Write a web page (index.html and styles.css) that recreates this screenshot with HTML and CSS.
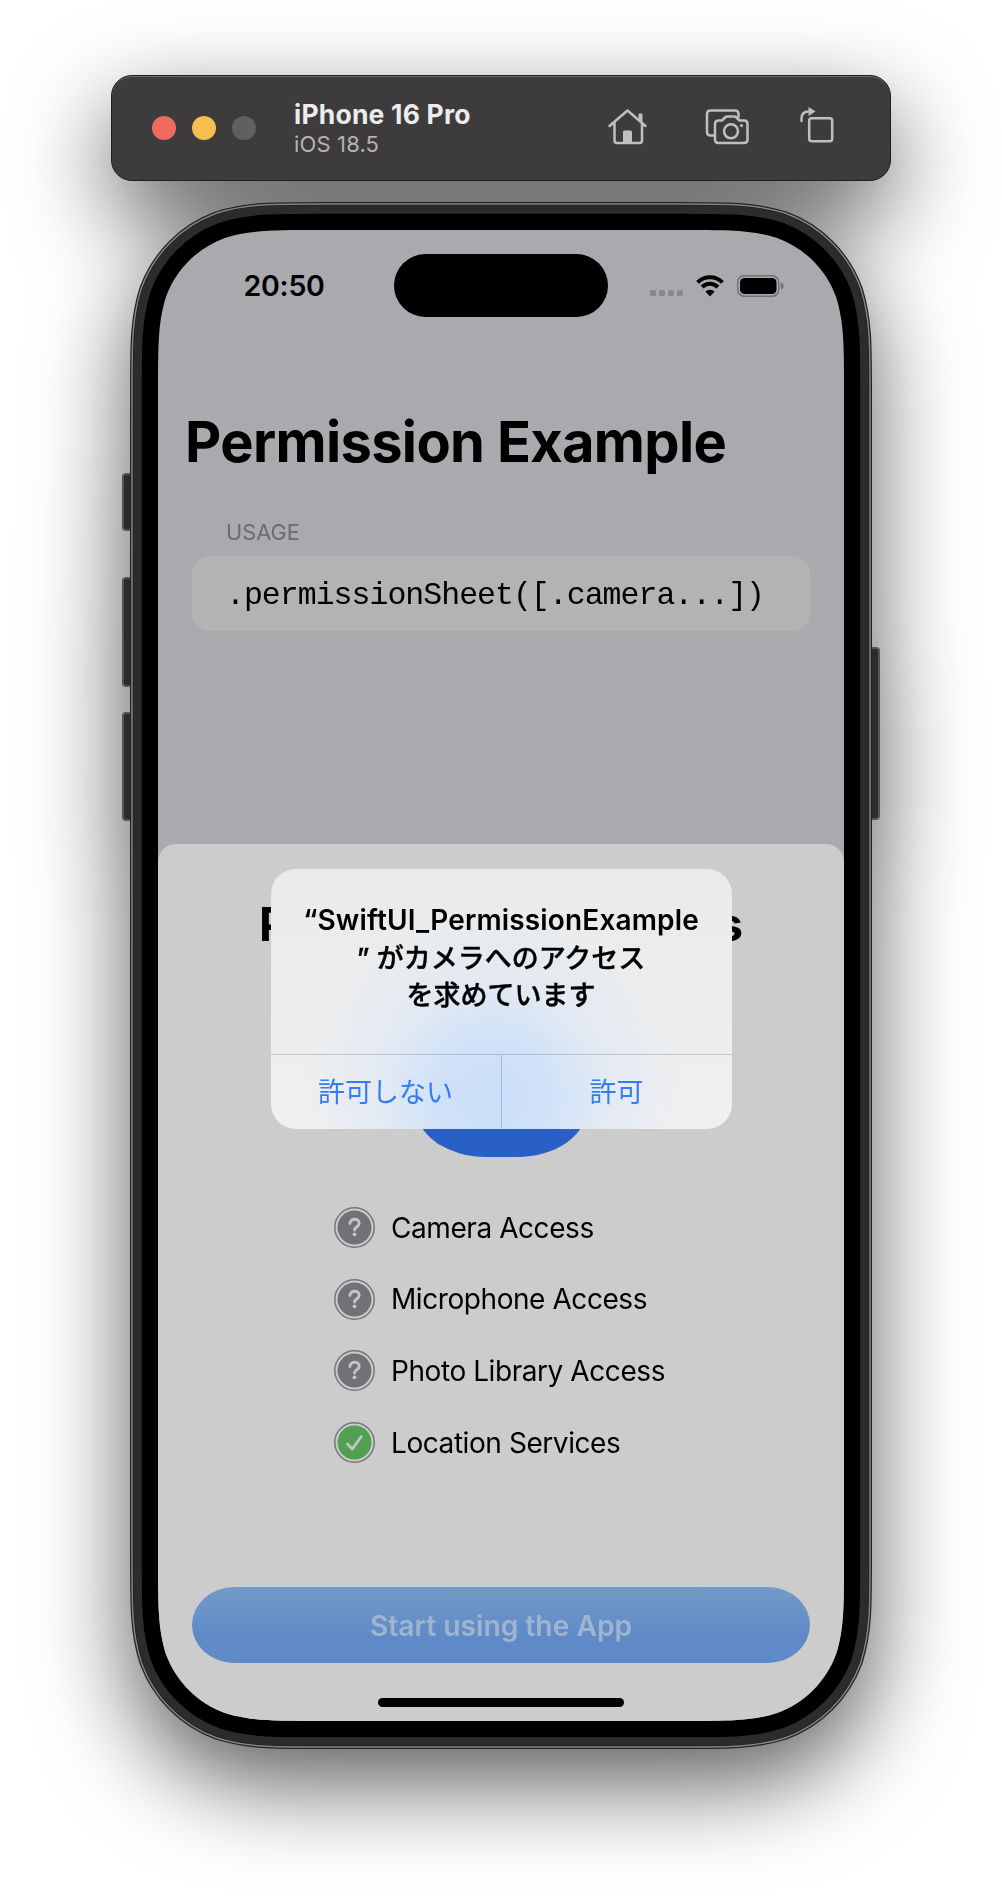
FILE: index.html
```html
<!DOCTYPE html>
<html lang="ja">
<head>
<meta charset="utf-8">
<title>Permission Example</title>
<link rel="stylesheet" href="styles.css">
</head>
<body>
<div class="simulator">
  <header class="toolbar">
    <div class="lights"><i class="light red"></i><i class="light yellow"></i><i class="light off"></i></div>
    <div class="device">
      <strong class="device-name">iPhone 16 Pro</strong>
      <span class="device-os">iOS 18.5</span>
    </div>
    <div class="tools">
      <svg class="tool" width="40" height="40" viewBox="0 0 40 40"><path d="M1.500 18 19.500 2.500 37.500 18M6.500 15V32.500Q6.500 35 9 35H31.500Q34 35 34 32.500V15"/><path class="solid" d="M15 35V24Q15 22.500 16.500 22.500H22.500Q24 22.500 24 24V35ZM30.500 6.500Q30.500 5.500 31.500 5.500H33.500Q34.500 5.500 34.500 6.500V15.500L30.500 12Z"/></svg>
      <svg class="tool" width="46" height="40" viewBox="0 0 46 40"><path d="M9 27.500H5.500Q2 27.500 2 24V6Q2 2.500 5.500 2.500H30Q33.500 2.500 33.500 6V9"/><path d="M13.500 12.500H17L20 9.500Q21 8.500 22.500 8.500H29Q30.500 8.500 31.500 9.500L34.500 12.500H39Q42.500 12.500 42.500 16V31.500Q42.500 35 39 35H13.500Q10 35 10 31.500V16Q10 12.500 13.500 12.500Z"/><circle cx="26" cy="23.300" r="7"/><circle class="solid" cx="36.500" cy="17.500" r="1.600"/></svg>
      <svg class="tool rotate" width="40" height="40" viewBox="0 0 40 40"><rect x="9.200" y="10.200" width="23" height="23" rx="2.500"/><path d="M1.500 13V10.500Q1.500 3.500 9 3.500"/><path class="solid" d="M8.500-1 15.500 3.500 8.500 8Z"/></svg>
    </div>
  </header>

  <div class="phone">
    <i class="side action"></i><i class="side vol-up"></i><i class="side vol-down"></i><i class="side power"></i>
    <svg class="frame" viewBox="-28 -28 742 1547" width="742" height="1547">
      <defs><path id="outline" d="M162 0H524C570.600 0 593.900 0 619.100 7.900C646.500 17.900 668.100 39.500 678.100 66.900C686 92.100 686 115.400 686 162V1329C686 1375.600 686 1398.900 678.100 1424.100C668.100 1451.500 646.500 1473.100 619.100 1483.100C593.900 1491 570.600 1491 524 1491H162C115.400 1491 92.100 1491 66.900 1483.100C39.500 1473.100 17.900 1451.500 7.900 1424.100C0 1398.900 0 1375.600 0 1329V162C0 115.400 0 92.100 7.900 66.900C17.900 39.500 39.500 17.900 66.900 7.900C92.100 0 115.400 0 162 0Z"/></defs>
      <use href="#outline" class="hairline"/>
      <use href="#outline" class="rim"/>
      <use href="#outline" class="edge"/>
      <use href="#outline" class="band"/>
      <use href="#outline" class="bezel"/>
    </svg>

    <div class="screen">
      <section class="app">
        <div class="status">
          <div class="time">20:50</div>
          <div class="island"></div>
          <div class="indicators">
            <svg class="signal" width="34" height="22" viewBox="0 0 34 22"><rect x="0" y="15" width="6" height="6" rx="1.500"/><rect x="9" y="15" width="6" height="6" rx="1.500"/><rect x="18" y="15" width="6" height="6" rx="1.500"/><rect x="27" y="15" width="6" height="6" rx="1.500"/></svg>
            <svg class="wifi" width="28" height="22" viewBox="0 0 28 22"><path d="M1.600 7.400A17.700 17.700 0 0 1 26.400 7.400M6.100 12A11.300 11.300 0 0 1 21.900 12"/><path class="core" d="M9.400 16.600A6.600 6.600 0 0 1 18.600 16.600L14 21.400Z"/></svg>
            <svg class="battery" width="47" height="22" viewBox="0 0 47 22"><rect class="shell" x=".7" y=".7" width="41" height="20.600" rx="6.500"/><rect x="3" y="3" width="36.500" height="16" rx="4.500"/><path class="nub" d="M43.700 7.500Q46.700 8.500 46.700 11T43.700 14.500Z"/></svg>
          </div>
        </div>
        <h1 class="title">Permission Example</h1>
        <div class="group-label">USAGE</div>
        <div class="code-row">.permissionSheet([.camera...])</div>
      </section>

      <section class="sheet">
        <h2 class="sheet-title"><span>P</span><span>s</span></h2>
        <div class="sheet-icon"></div>
        <ul class="permissions">
          <li class="permission"><svg class="badge" viewBox="0 0 41 41"><circle class="ring" cx="20.500" cy="20.500" r="19.700"/><circle class="disc" cx="20.500" cy="20.500" r="17"/><path class="mark" d="M15.900 16.500C16 10.700 25.200 10.900 25.200 16.200C25.200 19.600 20.600 19.600 20.600 23"/><circle class="dot" cx="20.500" cy="27.300" r="1.900"/></svg>Camera Access</li>
          <li class="permission"><svg class="badge" viewBox="0 0 41 41"><circle class="ring" cx="20.500" cy="20.500" r="19.700"/><circle class="disc" cx="20.500" cy="20.500" r="17"/><path class="mark" d="M15.900 16.500C16 10.700 25.200 10.900 25.200 16.200C25.200 19.600 20.600 19.600 20.600 23"/><circle class="dot" cx="20.500" cy="27.300" r="1.900"/></svg>Microphone Access</li>
          <li class="permission"><svg class="badge" viewBox="0 0 41 41"><circle class="ring" cx="20.500" cy="20.500" r="19.700"/><circle class="disc" cx="20.500" cy="20.500" r="17"/><path class="mark" d="M15.900 16.500C16 10.700 25.200 10.900 25.200 16.200C25.200 19.600 20.600 19.600 20.600 23"/><circle class="dot" cx="20.500" cy="27.300" r="1.900"/></svg>Photo Library Access</li>
          <li class="permission granted"><svg class="badge" viewBox="0 0 41 41"><circle class="ring" cx="20.500" cy="20.500" r="19.700"/><circle class="disc" cx="20.500" cy="20.500" r="17"/><path class="mark" d="M13.500 22 18.300 27 27.300 14.500"/></svg>Location Services</li>
        </ul>
        <button class="start">Start using the App</button>
        <div class="home-indicator"></div>
      </section>

      <div class="alert">
        <div class="alert-text">
          <span class="line latin">“SwiftUI_PermissionExample</span>
          <span class="line">” がカメラへのアクセス</span>
          <span class="line">を求めています</span>
        </div>
        <div class="alert-actions">
          <button class="alert-button">許可しない</button>
          <button class="alert-button">許可</button>
        </div>
      </div>
    </div>
  </div>
</div>
</body>
</html>
```

FILE: styles.css
```css
* { box-sizing: border-box; }

body {
  margin: 0;
  height: 1900px;
  overflow: hidden;
  background: #fff;
  color: #000;
  font-family: Inter, "Noto Sans CJK JP", sans-serif;
}

button { border: 0; padding: 0; background: none; font-family: inherit; }

.simulator {
  display: flex;
  flex-direction: column;
  align-items: center;
  padding-top: 75px;
  filter: drop-shadow(0 35px 47px rgba(0, 0, 0, .63));
}

/* Simulator window bar */
.toolbar {
  width: 780px;
  height: 106px;
  display: flex;
  align-items: center;
  padding-left: 40px;
  border-radius: 21px;
  background: #3e3b3c;
  border: 1px solid #1d1f1f;
  box-shadow: inset 0 1px 0 #6c6d6c;
}
.lights { display: flex; gap: 16px; }
.light { width: 24px; height: 24px; border-radius: 50%; }
.red { background: #ee6a5f; }
.yellow { background: #f5bf4f; }
.off { background: #615f60; }
.device { display: flex; flex-direction: column; flex: none; width: 314px; margin-left: 38px; padding-top: 1px; }
.device-name { font-size: 26.500px; line-height: 31px; font-weight: 700; color: #ececec; letter-spacing: .2px; }
.device-os { font-size: 22px; line-height: 28px; color: #b4b2b3; letter-spacing: .15px; }
.tools { display: flex; gap: 57px; }
.tool { fill: none; stroke: #c0bebf; stroke-width: 2.500; stroke-linecap: round; stroke-linejoin: round; overflow: visible; }
.tool .solid { fill: #c0bebf; stroke: none; }
.rotate { margin-left: -8px; }

/* Phone body */
.phone { position: relative; width: 742px; height: 1547px; margin-top: 21px; padding: 28px; }
.frame { position: absolute; left: 0; top: 0; overflow: visible; }
.hairline { stroke: #242424; stroke-width: 56; }
.rim { stroke: #858585; stroke-width: 53.500; }
.edge { stroke: #151515; stroke-width: 50.500; }
.band { stroke: #2c2c2c; stroke-width: 49.500; }
.bezel { stroke: #000; stroke-width: 32.500; }
.side {
  position: absolute;
  left: -8px;
  width: 12px;
  background: #2b2b2b;
  border: 2px solid #555;
  border-radius: 4px 0 0 4px;
}
.action { top: 271px; height: 58px; }
.vol-up { top: 375px; height: 110px; }
.vol-down { top: 510px; height: 109px; }
.power { left: 739px; top: 445px; height: 173px; width: 11px; border-radius: 0 4px 4px 0; }

.screen {
  position: relative;
  width: 686px;
  height: 1491px;
  background: #aaa9ae;
  clip-path: path("M162 0H524C570.6 0 593.9 0 619.1 7.9C646.5 17.9 668.1 39.5 678.1 66.9C686 92.1 686 115.4 686 162V1329C686 1375.6 686 1398.9 678.1 1424.1C668.1 1451.5 646.5 1473.1 619.1 1483.1C593.9 1491 570.6 1491 524 1491H162C115.4 1491 92.1 1491 66.9 1483.1C39.5 1473.1 17.9 1451.5 7.9 1424.1C0 1398.9 0 1375.6 0 1329V162C0 115.4 0 92.1 7.9 66.9C17.9 39.5 39.5 17.9 66.9 7.9C92.1 0 115.4 0 162 0Z");
}

.app { height: 614px; }
.status { height: 111px; display: flex; align-items: center; }
.time { width: 236px; padding-left: 85.500px; font-size: 28.500px; font-weight: 600; letter-spacing: -.25px; }
.island { width: 214px; height: 63px; border-radius: 32px; background: #000; }
.indicators { display: flex; padding-left: 42px; }
.signal { fill: #89888c; }
.wifi { margin-left: 12px; fill: none; stroke: #000; stroke-width: 4; }
.wifi .core { fill: #000; stroke: none; }
.battery { margin-left: 13px; }
.battery .shell { fill: none; stroke: #727175; stroke-width: 1.500; }
.battery .nub { fill: #727175; }

.title { margin: 67px 0 0 27px; font-size: 56px; line-height: 68px; font-weight: 700; letter-spacing: -.65px; white-space: nowrap; }
.group-label { margin: 43px 0 0 68px; font-size: 21.800px; line-height: 26px; color: #6c6b71; }
.code-row {
  margin: 11px 34px 0;
  height: 75px;
  padding: 3px 0 0 34px;
  border-radius: 18px;
  background: #b3b3b3;
  font-family: "Liberation Mono", monospace;
  font-size: 31.500px;
  line-height: 74px;
  letter-spacing: -.97px;
  white-space: nowrap;
}

.sheet { height: 877px; padding-top: 52px; border-radius: 18px 18px 0 0; background: #ccc; display: flex; flex-direction: column; align-items: center; }
.sheet-title { display: flex; justify-content: space-between; width: 484px; margin: 0; font-size: 46px; line-height: 56px; font-weight: 700; }
.sheet-icon { width: 171px; height: 171px; margin-top: 34px; border-radius: 70px / 49px; background: #2860c6; flex: none; }
.permissions { list-style: none; width: 334px; margin: 50px 0 0; padding: 0; display: flex; flex-direction: column; gap: 30.700px; }
.permission { display: flex; align-items: center; gap: 16px; height: 41px; font-size: 28px; letter-spacing: -.43px; white-space: nowrap; }
.badge { width: 41px; height: 41px; flex: none; }
.ring { fill: none; stroke: #77767b; stroke-width: 1.500; }
.disc { fill: #727176; }
.granted .disc { fill: #519f52; }
.mark { fill: none; stroke: #c5c5c5; stroke-width: 2.900; stroke-linecap: round; stroke-linejoin: round; }
.dot { fill: #c5c5c5; }
.start {
  width: 618px;
  height: 76px;
  margin-top: 124px;
  padding-top: 1px;
  flex: none;
  border-radius: 42px / 38px;
  background: linear-gradient(#739bc8, #5f8ac7 65%);
  color: #a0b4d0;
  font-size: 28.200px;
  font-weight: 600;
}
.home-indicator { width: 246px; height: 9px; margin-top: 35px; border-radius: 5px; background: #000; flex: none; }

/* System alert floating over the sheet */
.alert {
  position: absolute;
  left: 112.500px;
  top: 639px;
  width: 461px;
  height: 260px;
  border-radius: 25px;
  overflow: hidden;
  background: radial-gradient(ellipse 190px 190px at 48% 88%, #cbdff9 0, #cfe1f8 28%, rgba(222, 232, 245, .7) 60%, rgba(236, 238, 238, 0) 100%), linear-gradient(#e9eaea, #f0f0f0);
}
.alert-text { height: 185px; padding-top: 33px; text-align: center; font-size: 27px; font-weight: 500; -webkit-text-stroke: .4px #000; }
.latin { font-size: 28px; font-weight: 600; letter-spacing: .15px; -webkit-text-stroke: 0; }
.line { display: block; height: 37.500px; line-height: 37.500px; white-space: nowrap; }
.alert-actions { display: flex; height: 75px; border-top: 1px solid rgba(90, 110, 130, .3); }
.alert-button { flex: 1; color: #347cf6; font-size: 27px; line-height: 37px; }
.alert-button + .alert-button { border-left: 1px solid rgba(80, 120, 160, .35); }
```
